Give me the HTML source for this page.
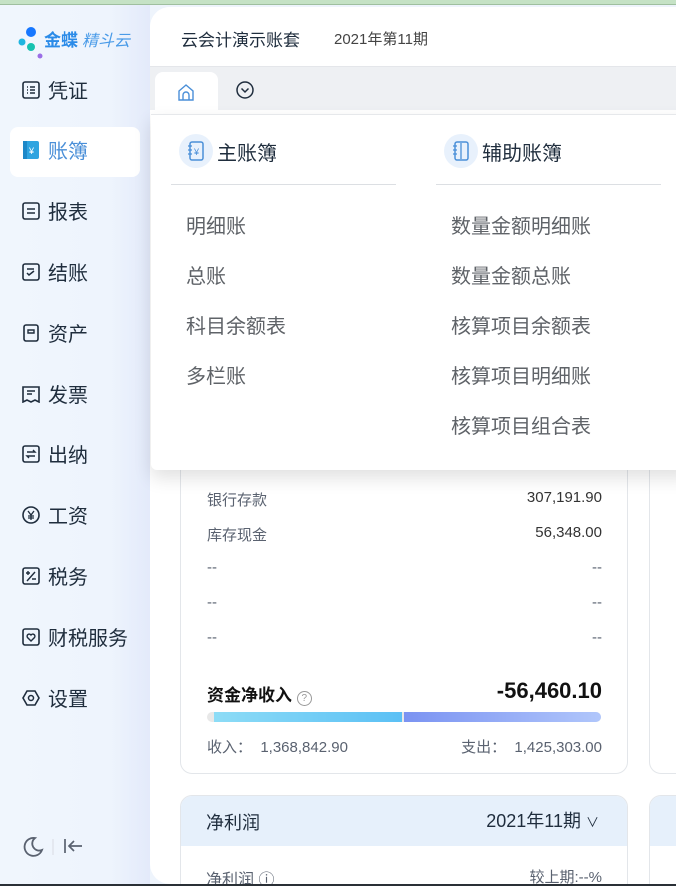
<!DOCTYPE html>
<html><head><meta charset="utf-8"><style>
*{margin:0;padding:0;box-sizing:border-box}
body{width:676px;height:886px;overflow:hidden;position:relative;background:#eef4fc;font-family:"Liberation Sans","Noto Sans CJK SC",sans-serif;color:#1f2d3d}
.top{position:absolute;left:0;top:0;width:676px;height:5px;background:#c5e2c5;border-bottom:1px solid #9fbf9f}
.bot{position:absolute;left:0;top:884px;width:676px;height:2px;background:#2a3036}
.side{position:absolute;left:0;top:5px;width:150px;height:879px;background:linear-gradient(90deg,#f0f6fd 0,#eef4fd 110px,#e3eafa 150px)}
.logo{position:absolute;left:18px;top:20px}
.nav{position:absolute;left:22px;font-size:20px;color:#1f2d3d;display:flex;align-items:center}
.nav svg{margin-right:8px}
.act{position:absolute;left:10px;top:122px;width:130px;height:50px;background:#fff;border-radius:8px}
.main{position:absolute;left:150px;top:7px;width:540px;height:877px;background:#fff;border-radius:20px 0 0 20px;overflow:hidden}
.hdr{position:absolute;left:0;top:0;width:540px;height:59px;background:#fff}
.tabs{position:absolute;left:0;top:59px;width:540px;height:44px;background:#eef0f3;border-top:1px solid #e4e6ea}
.tab{position:absolute;left:5px;top:5px;width:63px;height:40px;background:#fff;border-radius:8px 8px 0 0}
.drop{position:absolute;left:151px;top:114px;width:540px;height:356px;background:#fff;border-top:1px solid #e6e8eb;box-shadow:0 8px 18px rgba(0,0,0,.12);border-radius:0 0 0 6px}
.h{position:absolute;font-size:20px;color:#1f2d3d;display:flex;align-items:center}
.ic{width:34px;height:34px;border-radius:50%;background:#e8f1fc;display:flex;align-items:center;justify-content:center;margin-right:4px}
.ln{position:absolute;height:1px;background:#dcdfe3}
.it{position:absolute;font-size:20px;color:#5f6368}
.card{position:absolute;border:1px solid #e3e6ea;border-radius:12px;background:#fff}
.r{position:absolute;font-size:15px;color:#5a6270}
</style></head><body>
<div class="top"></div>
<div class="side">
 <div class="logo"><svg width="115" height="40"><circle cx="13" cy="7" r="5" fill="#1677ff"/><circle cx="4" cy="17" r="3.5" fill="#1fb5e0"/><circle cx="13" cy="22" r="4" fill="#16c2b0"/><circle cx="22" cy="31" r="2.5" fill="#9b6ee6"/><text x="26" y="21" font-size="17" font-weight="bold" fill="#2b8be8" font-family="Noto Sans CJK SC">金蝶</text><text x="64" y="21" font-size="16" font-style="italic" fill="#4a9be8" font-family="Noto Sans CJK SC">精斗云</text></svg></div>
 <div class="act"></div>
</div>
<div class="nav" style="top:75px"><svg width="18" height="18"><rect x="1" y="1" width="16" height="16" rx="2" fill="none" stroke="#1f2d3d" stroke-width="1.6"/><path d="M5 6h1M8 6h5M5 9h1M8 9h5M5 12h1M8 12h5" stroke="#1f2d3d" stroke-width="1.5"/></svg>凭证</div>
<div class="nav" style="top:135px;color:#4a8fd8"><svg width="18" height="20"><rect x="1" y="1" width="16" height="18" rx="2" fill="#2fa4e0"/><rect x="1" y="1" width="4" height="18" fill="#1d88c8"/><text x="7" y="14" font-size="9" fill="#fff">¥</text></svg>账簿</div>
<div class="nav" style="top:196px"><svg width="18" height="18"><rect x="1" y="1" width="16" height="16" rx="2" fill="none" stroke="#1f2d3d" stroke-width="1.6"/><path d="M5 7h8M5 11h8" stroke="#1f2d3d" stroke-width="1.5"/></svg>报表</div>
<div class="nav" style="top:257px"><svg width="18" height="18"><rect x="1" y="1" width="16" height="16" rx="2" fill="none" stroke="#1f2d3d" stroke-width="1.6"/><path d="M5 6h7M5 10l2 2 5-4" fill="none" stroke="#1f2d3d" stroke-width="1.5"/></svg>结账</div>
<div class="nav" style="top:318px"><svg width="18" height="18"><rect x="2" y="1" width="14" height="16" rx="2" fill="none" stroke="#1f2d3d" stroke-width="1.6"/><path d="M6 6h6v3H6z" fill="none" stroke="#1f2d3d" stroke-width="1.4"/></svg>资产</div>
<div class="nav" style="top:379px"><svg width="18" height="18"><path d="M1 2h16v15l-4-2-4 2-4-2-4 2z" fill="none" stroke="#1f2d3d" stroke-width="1.6"/><path d="M5 6h8M5 9h5" stroke="#1f2d3d" stroke-width="1.4"/></svg>发票</div>
<div class="nav" style="top:439px"><svg width="18" height="18"><rect x="1" y="1" width="16" height="16" rx="2" fill="none" stroke="#1f2d3d" stroke-width="1.6"/><path d="M5 7h8l-2-2M13 11H5l2 2" fill="none" stroke="#1f2d3d" stroke-width="1.4"/></svg>出纳</div>
<div class="nav" style="top:500px"><svg width="18" height="18"><circle cx="9" cy="9" r="8" fill="none" stroke="#1f2d3d" stroke-width="1.6"/><path d="M6 5l3 4 3-4M9 9v5M6 10h6M6 12h6" fill="none" stroke="#1f2d3d" stroke-width="1.3"/></svg>工资</div>
<div class="nav" style="top:561px"><svg width="18" height="18"><rect x="1" y="1" width="16" height="16" rx="2" fill="none" stroke="#1f2d3d" stroke-width="1.6"/><path d="M4 6h4M6 4v4M13 5l-8 9M10 12h4" fill="none" stroke="#1f2d3d" stroke-width="1.4"/></svg>税务</div>
<div class="nav" style="top:622px"><svg width="18" height="18"><rect x="1" y="1" width="16" height="16" rx="2" fill="none" stroke="#1f2d3d" stroke-width="1.6"/><path d="M9 13l-3.5-3.5a2 2 0 0 1 3.5-2.5 2 2 0 0 1 3.5 2.5z" fill="none" stroke="#1f2d3d" stroke-width="1.4"/></svg>财税服务</div>
<div class="nav" style="top:683px"><svg width="18" height="18"><path d="M5 2h8l4 7-4 7H5L1 9z" fill="none" stroke="#1f2d3d" stroke-width="1.6"/><circle cx="9" cy="9" r="2.5" fill="none" stroke="#1f2d3d" stroke-width="1.5"/></svg>设置</div>
<svg style="position:absolute;left:20px;top:835px" width="70" height="24"><path d="M15 3a9 9 0 1 0 7 12 7 7 0 0 1-7-12z" fill="none" stroke="#5a6270" stroke-width="1.8"/><path d="M33 4v16" stroke="#d8dce2"/><path d="M45 4v14M62 11H49M54 6l-5 5 5 5" fill="none" stroke="#5a6270" stroke-width="1.7"/></svg>

<div class="main">
 <div class="hdr"><div style="position:absolute;left:31px;top:19px;font-size:17px">云会计演示账套</div><div style="position:absolute;left:184px;top:21px;font-size:15px;color:#444">2021年第11期</div></div>
 <div class="tabs"><div class="tab"><svg style="position:absolute;left:22px;top:11px" width="18" height="18"><path d="M2 8l7-6 7 6v9H2z M6 17v-5a3 3 0 0 1 6 0v5" fill="none" stroke="#4a8fd8" stroke-width="1.4"/></svg></div>
 <svg style="position:absolute;left:86px;top:14px" width="18" height="18"><circle cx="9" cy="9" r="8" fill="none" stroke="#1f2d3d" stroke-width="1.5"/><path d="M5.5 7.5L9 11l3.5-3.5" fill="none" stroke="#1f2d3d" stroke-width="1.5"/></svg></div>
 <div class="card" style="left:30px;top:400px;width:448px;height:367px">
  <div class="r" style="left:26px;top:81px">银行存款</div><div class="r" style="right:25px;top:81px;color:#333">307,191.90</div>
  <div class="r" style="left:26px;top:116px">库存现金</div><div class="r" style="right:25px;top:116px;color:#333">56,348.00</div>
  <div class="r" style="left:26px;top:151px">--</div><div class="r" style="right:25px;top:151px">--</div>
  <div class="r" style="left:26px;top:186px">--</div><div class="r" style="right:25px;top:186px">--</div>
  <div class="r" style="left:26px;top:221px">--</div><div class="r" style="right:25px;top:221px">--</div>
  <div style="position:absolute;left:26px;top:273px;font-size:17px;font-weight:bold;color:#111">资金净收入 <span style="display:inline-block;width:15px;height:15px;border:1px solid #999;border-radius:50%;font-size:10px;font-weight:normal;color:#999;text-align:center;line-height:13px">?</span></div>
  <div style="position:absolute;right:25px;top:270px;font-size:22px;font-weight:bold;color:#111">-56,460.10</div>
  <div style="position:absolute;left:26px;top:304px;width:394px;height:10px;border-radius:5px;background:#e8e8e8;overflow:hidden"><div style="position:absolute;left:7px;top:0;width:188px;height:10px;background:linear-gradient(90deg,#8ddcf6,#5bc0f5)"></div><div style="position:absolute;left:197px;top:0;width:197px;height:10px;background:linear-gradient(90deg,#7b93f2,#b0c6fb)"></div></div>
  <div class="r" style="left:26px;top:328px">收入：&nbsp; 1,368,842.90</div><div class="r" style="right:25px;top:328px">支出：&nbsp; 1,425,303.00</div>
 </div>
 <div class="card" style="left:499px;top:400px;width:60px;height:367px"></div>
 <div class="card" style="left:30px;top:788px;width:448px;height:120px;overflow:hidden"><div style="height:50px;background:#e6f0fb;position:relative"><div style="position:absolute;left:25px;top:13px;font-size:18px">净利润</div><div style="position:absolute;right:28px;top:11px;font-size:18px">2021年11期 <span style="font-size:13px">∨</span></div></div>
  <div class="r" style="left:25px;top:70px;font-size:16px">净利润 ⓘ</div><div class="r" style="right:25px;top:70px">较上期:--%</div></div>
 <div class="card" style="left:499px;top:788px;width:60px;height:120px;overflow:hidden"><div style="height:50px;background:#e6f0fb"></div></div>
</div>

<div class="drop">
 <div class="h" style="left:28px;top:19px"><div class="ic"><svg width="18" height="20"><rect x="3" y="1" width="13" height="18" rx="2" fill="none" stroke="#4a8fd8" stroke-width="1.5"/><path d="M1 5h4M1 9h4M1 13h4" stroke="#4a8fd8" stroke-width="1.3"/><text x="7" y="14" font-size="9" fill="#4a8fd8">¥</text></svg></div>主账簿</div>
 <div class="ln" style="left:20px;top:69px;width:225px"></div>
 <div class="h" style="left:293px;top:19px"><div class="ic"><svg width="18" height="20"><rect x="3" y="1" width="13" height="18" rx="2" fill="none" stroke="#4a8fd8" stroke-width="1.5"/><path d="M1 5h4M1 9h4M1 13h4M9 2v16" stroke="#4a8fd8" stroke-width="1.3"/></svg></div>辅助账簿</div>
 <div class="ln" style="left:285px;top:69px;width:225px"></div>
 <div class="it" style="left:35px;top:95px">明细账</div>
 <div class="it" style="left:35px;top:145px">总账</div>
 <div class="it" style="left:35px;top:195px">科目余额表</div>
 <div class="it" style="left:35px;top:245px">多栏账</div>
 <div class="it" style="left:300px;top:95px">数量金额明细账</div>
 <div class="it" style="left:300px;top:145px">数量金额总账</div>
 <div class="it" style="left:300px;top:195px">核算项目余额表</div>
 <div class="it" style="left:300px;top:245px">核算项目明细账</div>
 <div class="it" style="left:300px;top:295px">核算项目组合表</div>
</div>
<div class="bot"></div>
</body></html>
